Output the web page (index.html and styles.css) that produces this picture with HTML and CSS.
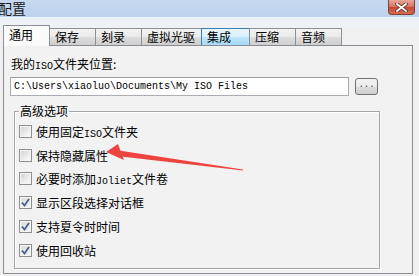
FILE: index.html
```html
<!DOCTYPE html>
<html>
<head>
<meta charset="utf-8">
<link rel="stylesheet" href="styles.css">
</head>
<body>
<div class="win">
  <div class="titlebar">
    <span class="title">配置</span>
    <span class="close"><svg width="13" height="9" viewBox="0 0 13 9"><path d="M2 1 L11 8 M11 1 L2 8" stroke="#5a2a22" stroke-width="3.4" stroke-linecap="square"/><path d="M2 1 L11 8 M11 1 L2 8" stroke="#fff" stroke-width="1.8" stroke-linecap="square"/></svg></span>
  </div>
  <div class="tabs">
    <div class="tab active">通用</div>
    <div class="tab">保存</div>
    <div class="tab">刻录</div>
    <div class="tab wide">虚拟光驱</div>
    <div class="tab hover">集成</div>
    <div class="tab">压缩</div>
    <div class="tab">音频</div>
  </div>
  <div class="panel">
    <div class="label">我的<span class="m">ISO</span>文件夹位置:</div>
    <div class="pathrow">
      <div class="input">C:\Users\xiaoluo\Documents\My ISO Files</div>
      <div class="btn">...</div>
    </div>
    <div class="group">
      <div class="legend">高级选项</div>
      <div class="rows">
        <div class="row"><span class="cb"></span><span>使用固定<span class="m">ISO</span>文件夹</span></div>
        <div class="row"><span class="cb"></span><span>保持隐藏属性</span></div>
        <div class="row"><span class="cb"></span><span>必要时添加<span class="m">Joliet</span>文件卷</span></div>
        <div class="row"><span class="cb checked"><svg width="11" height="11" viewBox="0 0 11 11"><path d="M2 5.5 L4.5 8.5 L9 2" fill="none" stroke="#4b5f8f" stroke-width="1.8"/></svg></span><span>显示区段选择对话框</span></div>
        <div class="row"><span class="cb checked"><svg width="11" height="11" viewBox="0 0 11 11"><path d="M2 5.5 L4.5 8.5 L9 2" fill="none" stroke="#4b5f8f" stroke-width="1.8"/></svg></span><span>支持夏令时时间</span></div>
        <div class="row"><span class="cb checked"><svg width="11" height="11" viewBox="0 0 11 11"><path d="M2 5.5 L4.5 8.5 L9 2" fill="none" stroke="#4b5f8f" stroke-width="1.8"/></svg></span><span>使用回收站</span></div>
      </div>
    </div>
  </div>
  <svg class="arrow" width="419" height="276" viewBox="0 0 419 276">
    <polygon points="106,152 118,144 124,160" fill="#ee4440"/>
    <polygon points="119,150.5 243,169.6 243,170.4 121,156.5" fill="#ee4440"/>
  </svg>
</div>
</body>
</html>
```

FILE: styles.css
```css
* { box-sizing: border-box; }
html, body { margin: 0; padding: 0; }
body {
  width: 419px;
  height: 276px;
  overflow: hidden;
  background: #f0f0f0;
  font-family: "Noto Sans CJK SC", "Noto Sans", sans-serif;
  font-size: 12px;
  color: #000;
}
.win {
  position: relative;
  width: 419px;
  height: 276px;
  background: linear-gradient(#dfe9f5 0, #eef2f7 24px, #f0f0f0 30px);
}
.titlebar {
  height: 17px;
  display: flex;
  align-items: flex-start;
  background: linear-gradient(#c6d9ef, #bdd2ec);
}
.title {
  font-size: 14px;
  line-height: 17px;
  margin-left: -2px;
  color: #1a1a1a;
}
.close {
  margin-left: auto;
  margin-right: 4px;
  width: 27px;
  height: 15px;
  border: 1px solid #8b3c31;
  border-top: none;
  border-radius: 0 0 4px 4px;
  background: linear-gradient(#e9a89b, #d4705f 50%, #c24a38 51%, #d66a52);
  display: flex;
  align-items: center;
  justify-content: center;
}
.tabs {
  display: flex;
  align-items: flex-end;
  height: 20px;
  margin-top: 8px;
  padding-left: 3px;
  position: relative;
  z-index: 1;
}
.tab {
  width: 47px;
  height: 17px;
  border: 1px solid #8d9099;
  border-bottom: none;
  margin-left: -1px;
  padding-left: 5px;
  line-height: 16px;
  background: linear-gradient(#f2f2f2, #ebebeb 50%, #dddddd 51%, #cfcfcf);
}
.tab.wide { width: 61px; }
.tab.hover {
  width: 49px;
  border-color: #3c7fb1;
  background: linear-gradient(#eaf6fd, #d9f0fc 50%, #bee6fd 51%, #a7d9f5);
}
.tab.active {
  margin-left: 0;
  width: 47px;
  height: 21px;
  margin-bottom: -1px;
  padding-left: 5px;
  line-height: 18px;
  background: #fbfbfb;
  position: relative;
  z-index: 2;
}
.panel {
  margin-left: 3px;
  width: 410px;
  height: 229px;
  border: 1px solid #898c95;
  background: #f2f2f2;
  padding: 11px 0 0 6px;
}
.m {
  font-family: "Liberation Mono", monospace;
  font-size: 10px;
}
.label {
  line-height: 14px;
  padding-left: 1px;
}
.pathrow {
  display: flex;
  align-items: center;
  margin-top: 3px;
  height: 19px;
}
.input {
  width: 339px;
  height: 19px;
  border: 1px solid #abadb3;
  border-top-color: #9ea0a6;
  background: #fff;
  font-family: "Liberation Mono", monospace;
  font-size: 10px;
  line-height: 17px;
  padding-left: 3px;
}
.btn {
  margin-left: 6px;
  width: 23px;
  height: 17px;
  border: 1px solid #707070;
  border-radius: 3px;
  background: linear-gradient(#f2f2f2, #ebebeb 50%, #dddddd 51%, #cfcfcf);
  font-family: "Liberation Mono", monospace;
  font-size: 9px;
  line-height: 13px;
  text-align: center;
  color: #333;
}
.group {
  margin-top: 15px;
  margin-left: 4px;
  width: 366px;
  height: 158px;
  border: 1px solid #a6a6a6;
  box-shadow: 1px 1px 0 #fff, inset 1px 1px 0 #fff;
}
.legend {
  width: max-content;
  margin: -8px 0 0 4px;
  padding: 0 1px;
  line-height: 14px;
  background: #f2f2f2;
}
.rows {
  display: flex;
  flex-direction: column;
  margin-top: 1.5px;
  padding-left: 4px;
}
.row {
  display: flex;
  align-items: center;
  height: 23.8px;
  gap: 4px;
}
.cb {
  width: 13px;
  height: 13px;
  border: 1px solid #8e8f8f;
  background: linear-gradient(135deg, #d0d0d0, #eeeeee 60%, #fafafa);
  box-shadow: inset 0 0 0 1px #f4f4f4;
  display: flex;
  align-items: center;
  justify-content: center;
  flex: none;
}
.cb.checked {
  background: linear-gradient(135deg, #dcdcdc, #f4f4f4);
}
.arrow {
  position: absolute;
  left: 0;
  top: 0;
  pointer-events: none;
}
```
